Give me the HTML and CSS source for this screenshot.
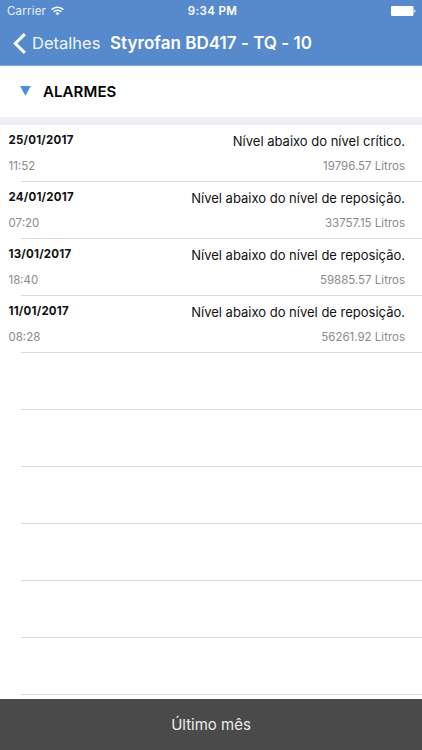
FILE: index.html
```html
<!DOCTYPE html>
<html lang="pt-BR">
<head>
  <meta charset="UTF-8">
  <meta name="viewport" content="width=device-width, initial-scale=1.0">
  <title>Styrofan BD417 - TQ - 10</title>
  <link rel="stylesheet" href="styles.css">
</head>
<body>
  <div class="app">
    <header>
      <div class="status-bar">
        <div class="carrier">
          <span>Carrier</span>
          <svg class="wifi" width="13" height="10" viewBox="0 0 13 10" fill="none" stroke="#fff" stroke-width="1.5">
            <path d="M0.7 3.6a8.2 8.2 0 0 1 11.6 0"/>
            <path d="M2.7 5.7a5.4 5.4 0 0 1 7.6 0"/>
            <path d="M6.5 9.3L4.4 7.2a3 3 0 0 1 4.2 0z" fill="#fff" stroke="none"/>
          </svg>
        </div>
        <span class="clock">9:34 PM</span>
        <svg class="battery" width="25" height="10" viewBox="0 0 25 10" fill="#fff">
          <rect x="0" y="0" width="22.5" height="10" rx="1.2"/>
          <path d="M23.3 3.2a2 2 0 0 1 0 3.6z"/>
        </svg>
      </div>
      <nav class="nav-bar">
        <a class="back" href="#">
          <svg width="13" height="21" viewBox="0 0 13 21" fill="none" stroke="#fff" stroke-width="3">
            <path d="M11.8 1.1L2.3 10.5l9.5 9.4"/>
          </svg>
          <span>Detalhes</span>
        </a>
        <h1>Styrofan BD417 - TQ - 10</h1>
      </nav>
    </header>

    <div class="section-title">
      <svg width="11" height="10" viewBox="0 0 11 10"><path d="M0 0h10.8L5.4 9.8z" fill="#4a90e2"/></svg>
      <h2>ALARMES</h2>
    </div>

    <ul class="alarm-list">
      <li class="alarm">
        <div class="line"><span class="date">25/01/2017</span><span class="message">Nível abaixo do nível crítico.</span></div>
        <div class="line sub"><span>11:52</span><span class="volume">19796.57 Litros</span></div>
      </li>
      <li class="alarm">
        <div class="line"><span class="date">24/01/2017</span><span class="message">Nível abaixo do nível de reposição.</span></div>
        <div class="line sub"><span>07:20</span><span class="volume">33757.15 Litros</span></div>
      </li>
      <li class="alarm">
        <div class="line"><span class="date">13/01/2017</span><span class="message">Nível abaixo do nível de reposição.</span></div>
        <div class="line sub"><span>18:40</span><span class="volume">59885.57 Litros</span></div>
      </li>
      <li class="alarm">
        <div class="line"><span class="date">11/01/2017</span><span class="message">Nível abaixo do nível de reposição.</span></div>
        <div class="line sub"><span>08:28</span><span class="volume">56261.92 Litros</span></div>
      </li>
      <!-- linhas vazias -->
      <li class="alarm"></li>
      <li class="alarm"></li>
      <li class="alarm"></li>
      <li class="alarm"></li>
      <li class="alarm"></li>
      <li class="alarm"></li>
    </ul>

    <footer>Último mês</footer>
  </div>
</body>
</html>
```

FILE: styles.css
```css
* {
  box-sizing: border-box;
  margin: 0;
  padding: 0;
}
body {
  font-family: Inter, "Liberation Sans", sans-serif;
  background-color: #fff;
  color: #111;
}
.app {
  display: flex;
  flex-direction: column;
  height: 750px;
  overflow: hidden;
}
header {
  height: 66px;
  flex-shrink: 0;
  background-color: #568acd;
  border-bottom: 1px solid #86a9d8;
  color: #fff;
}
.status-bar {
  display: grid;
  grid-template-columns: 1fr auto 1fr;
  align-items: center;
  height: 22px;
  padding: 0 6px 0 7px;
  font-size: 11.5px;
}
.carrier {
  display: flex;
  align-items: center;
  gap: 5px;
  letter-spacing: 0.2px;
  color: #e8f0fa;
}
.clock {
  padding-left: 2px;
  font-weight: 600;
  letter-spacing: 0.4px;
}
.battery {
  justify-self: end;
}
.nav-bar {
  display: flex;
  align-items: center;
  height: 42px;
  padding-left: 13px;
}
.back {
  display: flex;
  align-items: center;
  gap: 6px;
  width: 97px;
  color: #f0f5fc;
  font-size: 16.5px;
  text-decoration: none;
  white-space: nowrap;
}
.nav-bar h1 {
  font-size: 17px;
  font-weight: 600;
  letter-spacing: 0.03px;
  white-space: nowrap;
}
.section-title {
  display: flex;
  align-items: center;
  gap: 12px;
  height: 59px;
  flex-shrink: 0;
  padding: 0 0 1px 20px;
  border-bottom: 8px solid #efeff4;
}
.section-title h2 {
  font-size: 15px;
  font-weight: 600;
  letter-spacing: 0.1px;
  color: #000;
}
.alarm-list {
  flex: 1;
  min-height: 0;
  overflow: hidden;
  list-style: none;
}
.alarm {
  height: 57px;
  padding: 5px 17px 0 8.5px;
  background: linear-gradient(#dcdcde, #dcdcde) 21px 100% / 100% 1px no-repeat;
}
.line {
  display: flex;
  justify-content: space-between;
  height: 22px;
  line-height: 22px;
}
.date {
  line-height: 20px;
  font-size: 11.5px;
  font-weight: 700;
  letter-spacing: 0.22px;
}
.message {
  font-size: 13px;
}
.sub {
  height: 28px;
  line-height: 28px;
  font-size: 11.5px;
  color: #8a8a8e;
}
footer {
  height: 51px;
  flex-shrink: 0;
  background-color: #4a4a4a;
  color: #ececec;
  font-size: 15px;
  line-height: 51px;
  text-align: center;
}
```
